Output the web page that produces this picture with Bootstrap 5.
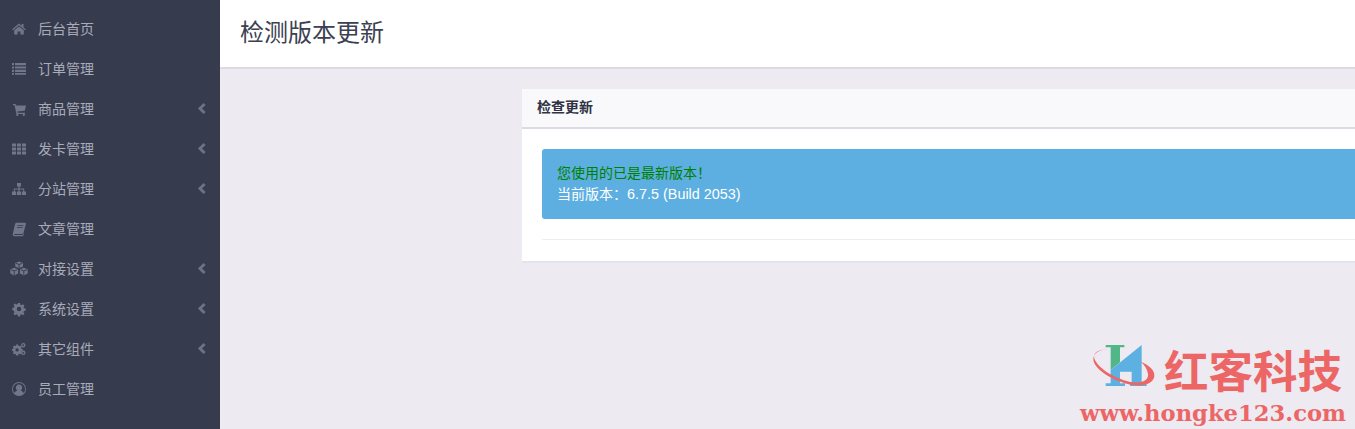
<!DOCTYPE html>
<html lang="zh-CN"><head><meta charset="utf-8"><title>检测版本更新</title>
<link rel="stylesheet" href="https://cdn.jsdelivr.net/npm/bootstrap@5.3.0/dist/css/bootstrap.min.css">
<style>
html,body{height:100%;overflow:hidden}
body{font-family:"Liberation Sans","Noto Sans CJK SC",sans-serif;font-size:14px;background:#edeaf1;color:#353a4d}
.side-col{width:220px;flex:none;background:#363b4e;padding-top:9px}
.side-link{height:40px;color:#a9abb9;padding:0 14px 0 12px}
.side-link:hover{color:#c9cad4}
.side-ico{width:14px;height:14px;flex:none;fill:#73768a;margin-right:12px;overflow:visible}
.side-arrow{width:8px;height:11px;fill:none;stroke:#6f7285;stroke-width:2.9;margin-left:auto;margin-right:0;margin-bottom:2px}
.main-col{flex:1;min-width:0}
.page-head{height:69px;background:#fff;border-bottom:2px solid #dddae5;padding-left:20px;color:#3b4052}
.page-head h1{font-size:24px;font-weight:400;margin:0;line-height:66px}
.update-card{margin:20px 0 0 302px;border:0;border-radius:0;border-bottom:2px solid #e4e2ea;flex:none}
.update-card .card-header{height:40px;background:#f9f9fb;border:0;border-bottom:2px solid #dddae5;border-radius:0;padding:0 15px;font-weight:700;color:#2f3344;line-height:37px}
.update-card .card-body{padding:20px 0 0 20px}
.note-box{background:#5cafe0;border:0;border-radius:3px 0 0 3px;color:#fff;padding:14px 15px;margin:0;line-height:21px}
.note-ok{color:#008000}
.note-ver{font-size:14.4px}
.soft-rule{margin:20px 0 21px;border:0;border-top:1px solid #eee;opacity:1}
.mark-wrap{position:absolute;left:1080px;top:342px;width:275px;height:87px;color:#ec6666}
.mark-logo{position:absolute;left:10px;top:-2px;width:80px;height:55px}
.mark-cn{position:absolute;left:84px;top:-2px;font:700 44.5px/58px "Noto Sans CJK SC",sans-serif;white-space:nowrap}
.mark-url{position:absolute;left:0;top:57px;font:700 22.65px/28px "DejaVu Serif",serif;white-space:nowrap}
</style></head>
<body>
<div class="d-flex h-100">
<nav class="side-col nav flex-column flex-nowrap">
<a class="side-link nav-link d-flex align-items-center" href="#"><svg class="side-ico" viewBox="0 0 14 14"><path d="M7 1.6.2 7.3l.8.9L7 3.3l6 4.9.8-.9-2.3-1.9V2h-1.800v1.800zM2.200 8.300 7 4.400l4.800 3.900v4.300H8.400V9.500H5.600v3.100H2.200z"/></svg>后台首页</a>
<a class="side-link nav-link d-flex align-items-center" href="#"><svg class="side-ico" viewBox="0 0 14 14"><path d="M0 1.100h2v2.200H0zM3 1.100h11v2.200H3zM0 4.400h2v2.200H0zM3 4.400h11v2.200H3zM0 7.700h2v2.200H0zM3 7.700h11v2.200H3zM0 10.900h2v1.900H0zM3 10.900h11v1.900H3z"/></svg>订单管理</a>
<a class="side-link nav-link d-flex align-items-center" href="#"><svg class="side-ico" viewBox="0 0 14 14"><path d="M1 2h2.600l.4 1.400H14l-1.200 5.400-7.600.8.300 1.100H13v1.200H4.400L2.600 3.200H1z"/><circle cx="5.300" cy="12.900" r="1.100"/><circle cx="11.800" cy="12.900" r="1.100"/></svg>商品管理<svg class="side-arrow side-ico" viewBox="0 0 8 11"><path d="M6.600 1 2 5.500 6.600 10"/></svg></a>
<a class="side-link nav-link d-flex align-items-center" href="#"><svg class="side-ico" viewBox="0 0 14 14"><path d="M0 1.500h4v3H0zM5 1.500h4v3H5zM10 1.500h4v3h-4zM0 5.500h4v3H0zM5 5.500h4v3H5zM10 5.500h4v3h-4zM0 9.500h4v3H0zM5 9.500h4v3H5zM10 9.500h4v3h-4z"/></svg>发卡管理<svg class="side-arrow side-ico" viewBox="0 0 8 11"><path d="M6.600 1 2 5.500 6.600 10"/></svg></a>
<a class="side-link nav-link d-flex align-items-center" href="#"><svg class="side-ico" viewBox="0 0 14 14"><path d="M5 1h4v3.400H7.600v2h4.600v3h1.800V13H9.800V9.500h1.400V7.400H7.600v2.100H9V13H5V9.500h1.400V7.400H2.800v2.100h1.400V13H0V9.500h1.800v-3h4.600v-2H5z"/></svg>分站管理<svg class="side-arrow side-ico" viewBox="0 0 8 11"><path d="M6.600 1 2 5.500 6.600 10"/></svg></a>
<a class="side-link nav-link d-flex align-items-center" href="#"><svg class="side-ico" viewBox="0 0 14 14"><path d="M4.600.8h8.200c.9 0 1.300.6 1.100 1.300l-2.300 8.400c-.2.800-.8 1.400-1.600 1.400H2.800c-.5 0-.7.200-.7.500 0 .3.200.5.700.5h7.400c.5 0 .8-.2 1-.6l.4-1 .5.200-.6 1.700c-.2.700-.8 1.100-1.500 1.100H2.300C1.100 13.800.5 13 .8 11.900L3 2.300C3.200 1.400 3.700.8 4.600.8zM5.600 3.200l-.2.800h5.900l.2-.8zM5 5.200l-.2.800h5.900l.2-.8z" fill-rule="evenodd"/></svg>文章管理</a>
<a class="side-link nav-link d-flex align-items-center" href="#"><svg class="side-ico" viewBox="0 0 14 14"><g><path d="M7.100 -.6 11 .9v3.700L7.100 6.300 3.200 4.600V.9z"/><path d="M2.200 5.800 6.100 7.300v4.300L2.200 13.500-1.700 11.600V7.300z"/><path d="M11.800 5.800l3.900 1.500v4.300l-3.900 1.900-3.900-1.900V7.300z"/></g><path d="M3.800 1.200 7.100 2.500l3.300-1.300M7.100 2.500v3.500M-1.100 7.600 2.200 8.900l3.300-1.300M2.200 8.900v4.300M8.500 7.600l3.300 1.300 3.300-1.300M11.800 8.900v4.300" fill="none" stroke="#363b4e" stroke-width=".9"/></svg>对接设置<svg class="side-arrow side-ico" viewBox="0 0 8 11"><path d="M6.600 1 2 5.500 6.600 10"/></svg></a>
<a class="side-link nav-link d-flex align-items-center" href="#"><svg class="side-ico" viewBox="0 0 14 14"><path fill-rule="evenodd" d="M5.900 1h2.200l.3 1.700 1.100.5 1.500-1 1.500 1.500-1 1.500.5 1.100 1.700.3v2.200l-1.700.3-.5 1.100 1 1.500-1.500 1.500-1.500-1-1.100.5-.3 1.700H5.900l-.3-1.700-1.100-.5-1.500 1-1.500-1.500 1-1.500-.5-1.100L.3 8.100V5.900l1.700-.3.500-1.100-1-1.500 1.500-1.500 1.500 1 1.100-.5zM7 4.800a2.200 2.200 0 1 0 0 4.400 2.200 2.200 0 0 0 0-4.400z" transform="translate(0 0)"/></svg>系统设置<svg class="side-arrow side-ico" viewBox="0 0 8 11"><path d="M6.600 1 2 5.500 6.600 10"/></svg></a>
<a class="side-link nav-link d-flex align-items-center" href="#"><svg class="side-ico" viewBox="0 0 14 14"><path fill-rule="evenodd" d="M3.500 3.600h2l.3 1.200.8.400 1.100-.6 1.300 1.300-.6 1.100.4.800 1.200.3v1.800l-1.200.3-.4.800.6 1.100-1.300 1.300-1.100-.6-.8.400-.3 1.200h-2l-.3-1.200-.8-.4-1.100.6L.4 12l.6-1.100-.4-.8L-.6 9.800V8l1.200-.3.400-.8L.4 5.800l1.300-1.300 1.100.6.800-.4zM4.500 7.200a1.700 1.700 0 1 0 0 3.400 1.700 1.700 0 0 0 0-3.400z" transform="translate(.6 -1)"/><path fill-rule="evenodd" d="M11.300 1a2.200 2.200 0 1 0 0 4.400 2.200 2.200 0 0 0 0-4.400zm0 1.300a.9.900 0 1 1 0 1.800.9.900 0 0 1 0-1.800zM11.300 8.600a2.200 2.200 0 1 0 0 4.400 2.200 2.200 0 0 0 0-4.400zm0 1.300a.9.900 0 1 1 0 1.800.9.900 0 0 1 0-1.800z"/></svg>其它组件<svg class="side-arrow side-ico" viewBox="0 0 8 11"><path d="M6.600 1 2 5.500 6.600 10"/></svg></a>
<a class="side-link nav-link d-flex align-items-center" href="#"><svg class="side-ico" viewBox="0 0 14 14"><path fill-rule="evenodd" d="M7 0a7 7 0 1 1 0 14A7 7 0 0 1 7 0zm0 1a6 6 0 0 0-4.500 10c.6-1.500 2-2.300 2.900-2.500a3.200 3.200 0 1 1 3.200 0c.9.200 2.300 1 2.900 2.500A6 6 0 0 0 7 1z"/></svg>员工管理</a>
</nav>
<main class="main-col d-flex flex-column">
<header class="page-head"><h1>检测版本更新</h1></header>
<section class="card update-card">
<div class="card-header">检查更新</div>
<div class="card-body">
<div class="alert note-box" role="alert"><span class="note-ok">您使用的已是最新版本！</span><br>当前版本：<span class="note-ver">6.7.5 (Build 2053)</span></div>
<hr class="soft-rule">
</div>
</section>
</main>
</div>
<div class="mark-wrap">
<svg class="mark-logo" viewBox="0 0 240 165"><path d="M47 15H103V22H90V67L62 90V22H47Z" fill="#52b788"/><path d="M62 90 155 15V130H170V138H120V130H125V95H90V130H105V138H47V130H62Z" fill="#5cb0e2"/><path d="M58 29C22 25 4 42 16 62 33 92 85 120 130 127 162 130 176 118 174 102 172 88 165 75 152 65 176 75 196 90 193 110 188 132 155 140 125 135 78 126 28 98 13 70 3 48 20 26 58 29Z" fill="#ec6666"/></svg>
<div class="mark-cn">红客科技</div>
<div class="mark-url">www.hongke123.com</div>
</div>
</body></html>
